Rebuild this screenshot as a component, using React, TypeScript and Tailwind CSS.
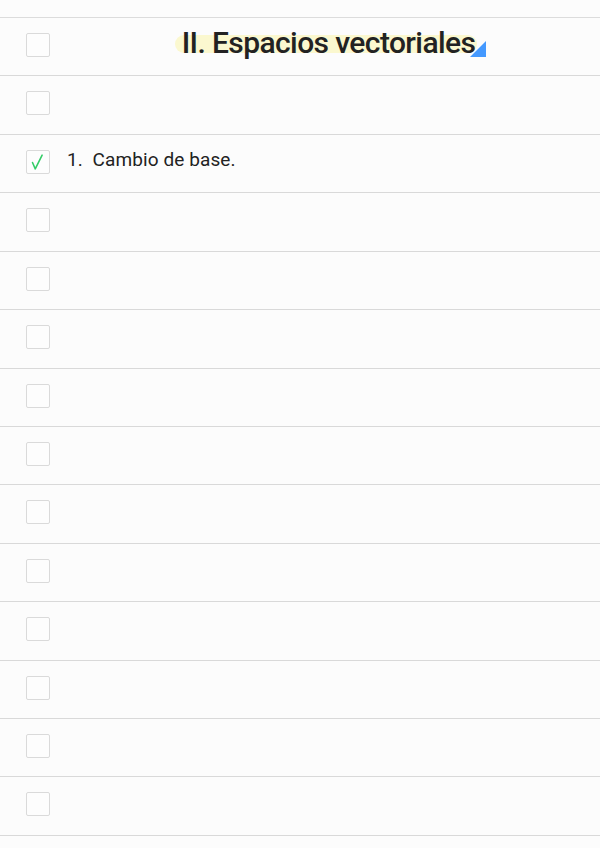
import React from 'react';

interface RowProps {
  checked?: boolean;
  children?: React.ReactNode;
}

const CheckBox: React.FC<{ checked?: boolean }> = ({ checked }) => (
  <div className="w-6 h-6 shrink-0 rounded-[2px] border border-[#dadada] bg-[#fdfdfd] flex items-center justify-center">
    {checked && (
      <svg width="24" height="24" viewBox="0 0 24 24" fill="none">
        <path d="M6 12.5 L9 19.5 L16.5 4.5" stroke="#33cc66" strokeWidth="1.7" strokeLinecap="round" strokeLinejoin="round" />
      </svg>
    )}
  </div>
);

const Row: React.FC<RowProps> = ({ checked, children }) => (
  <div className="h-[58.43px] border-b border-[#d9d9d9] flex items-start">
    <div className="pl-[26px] pt-[15px] w-[67px] shrink-0">
      <CheckBox checked={checked} />
    </div>
    <div className="flex-1 min-w-0 pr-[10px]">{children}</div>
  </div>
);

const App: React.FC = () => {
  const empty = Array.from({ length: 11 });
  return (
    <div className="min-h-[848px] w-full bg-[#fcfcfc] pt-[17px] font-['Roboto','Noto_Sans',sans-serif] text-[#222222]">
      <div className="border-t border-[#dcdcdc]">
        <Row>
          <div className="flex justify-center pt-[7px]">
            <span className="relative inline-block">
              <span className="absolute left-[-7px] right-[-2px] top-[10px] bottom-[8px] rounded-full bg-[#fbf8cf]" />
              <span className="relative font-medium text-[30px] leading-[36px] tracking-[-0.6px]">II. Espacios vectoriales</span>
              <span className="absolute right-[-11px] bottom-[4px] w-0 h-0 border-l-[16px] border-l-transparent border-b-[16px] border-b-[#4499ff]" />
            </span>
          </div>
        </Row>
        <Row />
        <Row checked>
          <div className="pt-[13px] text-[19px] leading-[24px] tracking-[0.1px] whitespace-pre">{'1.  Cambio de base.'}</div>
        </Row>
        {empty.map((_, i) => (
          <Row key={i} />
        ))}
      </div>
    </div>
  );
};

export default App;
